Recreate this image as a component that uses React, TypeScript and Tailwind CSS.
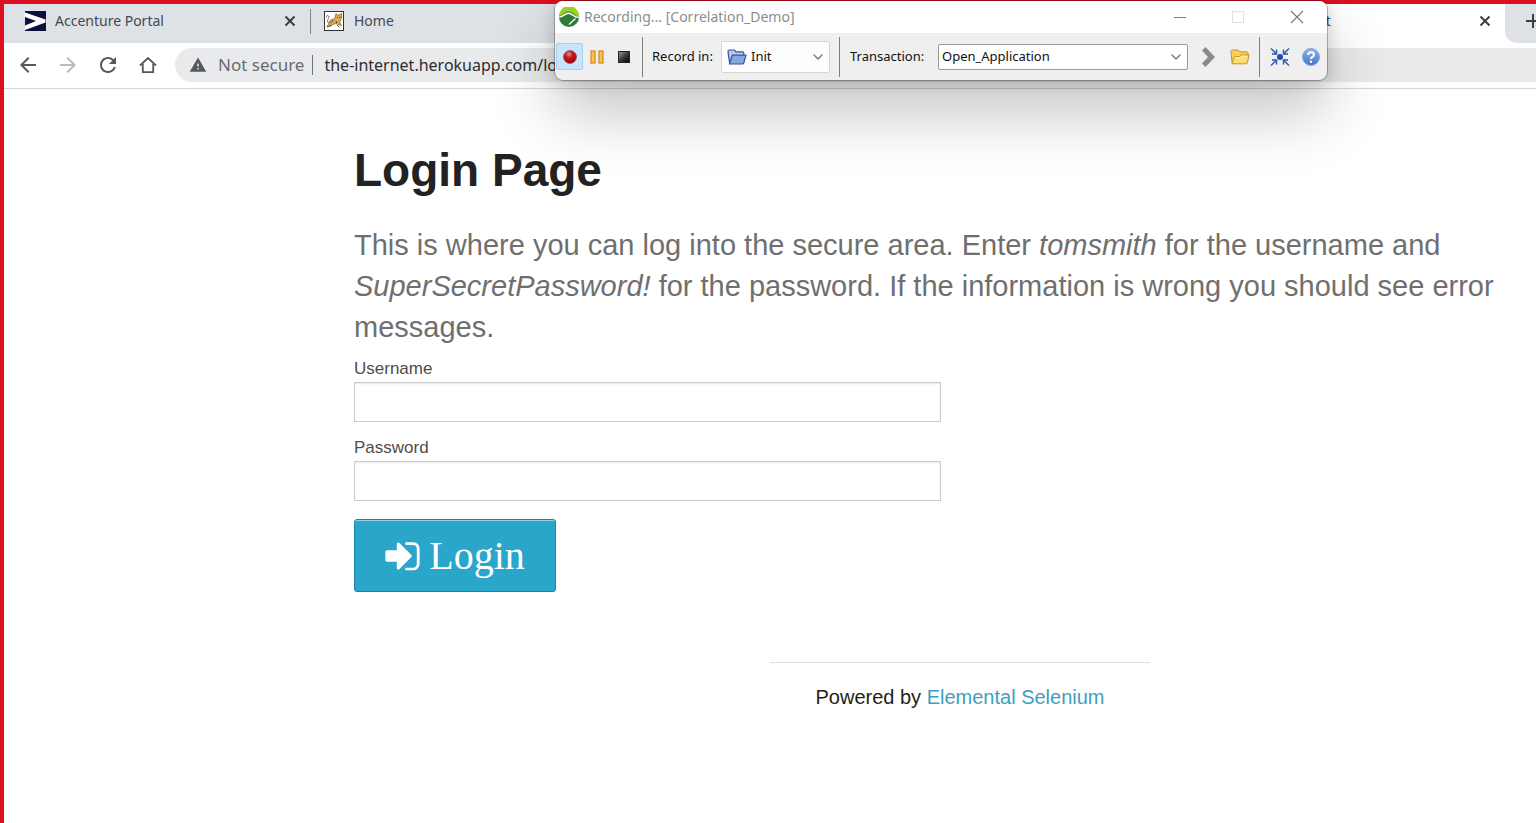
import React from "react";
import { MdArrowBack, MdArrowForward, MdRefresh, MdWarning } from "react-icons/md";
import { LuChevronDown } from "react-icons/lu";

function AccentureIcon() {
  return (
    <svg viewBox="0 0 21 20" className="h-5 w-[21px] shrink-0" aria-hidden="true">
      <rect width="21" height="20" fill="#0b1040" />
      <path d="M0 1.500L20.500 8.500V11.500L0 19V14.500L11 10L0 6Z" fill="#fff" />
    </svg>
  );
}

function CatIcon() {
  return (
    <svg viewBox="0 0 20 20" className="h-5 w-5 shrink-0" aria-hidden="true">
      <rect x=".5" y=".5" width="19" height="19" fill="#fff" stroke="#333" />
      <path d="M4.500 12C1.500 10 6 7 4.500 5C3.500 3.800 2.200 5 2.500 6.500" fill="none" stroke="#555" strokeWidth=".8" />
      <path d="M11.500 5L12 2.500L13.500 4L15.800 3.800L17.500 2L17.800 7L16.500 9L15.800 11.500L17.500 14.500L15 14L12 12.500L8.500 13.500L4.500 15.500L3 15L5 13L4.500 11L7.500 8.500L10.500 8Z" fill="#e0ab52" stroke="#6b4a1a" strokeWidth=".6" />
      <path d="M13 6L14 7M16 5.800L15.700 7M8 9L9 10.500M6.500 10.500L7.500 12M12 10L13 12" stroke="#3a2a12" strokeWidth=".8" />
      <path d="M2.500 16L8 14.500M13 14L15.500 16.500" stroke="#444" strokeWidth=".8" />
    </svg>
  );
}

function CloseGlyph() {
  return (
    <svg viewBox="0 0 12 12" className="h-3 w-3" aria-hidden="true">
      <path d="M1.500 1.500L10.500 10.500M10.500 1.500L1.500 10.500" stroke="#3c4043" strokeWidth="2" />
    </svg>
  );
}

function HomeGlyph() {
  return (
    <svg viewBox="0 0 18 18" className="h-[18px] w-[18px]" aria-hidden="true">
      <path d="M1 9.500L9 2L17 9.500M3.800 8V16.200H14.200V8" fill="none" stroke="#55585c" strokeWidth="1.800" />
    </svg>
  );
}

function NeoLoadIcon() {
  return (
    <svg viewBox="0 0 20 20" className="h-5 w-5 shrink-0" aria-hidden="true">
      <circle cx="10" cy="10" r="10" fill="#2f7a3b" />
      <path d="M0 9A10 10 0 0 1 20 9C16 10 14 4.500 9.500 4.500C5 4.500 4 9 0 9Z" fill="#9ad01c" />
      <path d="M.3 10C4.500 10 5.500 6.300 9.500 6.300C13.500 6.300 15 11 19.800 10.200" fill="none" stroke="#fff" strokeWidth="1.500" />
      <path d="M10 17.500L16.500 11.500" stroke="#fff" strokeWidth="1.300" />
    </svg>
  );
}

function RecordIcon() {
  return (
    <svg viewBox="0 0 16 16" className="h-4 w-4" aria-hidden="true">
      <defs>
        <radialGradient id="rec" cx=".42" cy=".28" r=".75">
          <stop offset="0" stopColor="#f08a8a" />
          <stop offset=".4" stopColor="#c9141c" />
          <stop offset="1" stopColor="#8e060c" />
        </radialGradient>
      </defs>
      <circle cx="8" cy="8" r="6.500" fill="url(#rec)" stroke="#a9404a" strokeWidth=".7" />
    </svg>
  );
}

function PauseIcon() {
  return (
    <svg viewBox="0 0 16 16" className="h-4 w-4" aria-hidden="true">
      <g fill="#f9c248" stroke="#d58420" strokeWidth="1.200">
        <rect x="2" y="2" width="4" height="12" />
        <rect x="10" y="2" width="4" height="12" />
      </g>
    </svg>
  );
}

function StopIcon() {
  return (
    <svg viewBox="0 0 16 16" className="h-4 w-4" aria-hidden="true">
      <defs>
        <linearGradient id="stop" x1="0" y1="0" x2="1" y2="1">
          <stop offset="0" stopColor="#a0a0a0" />
          <stop offset=".5" stopColor="#3a3a3a" />
          <stop offset="1" stopColor="#050505" />
        </linearGradient>
      </defs>
      <rect x="2.500" y="2.500" width="11" height="11" fill="url(#stop)" stroke="#222" />
    </svg>
  );
}

function BlueFolder() {
  return (
    <svg viewBox="0 0 20 16" className="h-4 w-5" aria-hidden="true">
      <path d="M2.500 13.500L1 3Q1 1 2.500 1H7.500L9 2.800H15.500Q16.800 2.800 16.800 4V6" fill="#b5cbee" stroke="#35549a" strokeWidth="1.200" />
      <path d="M2.500 15L5 7Q5.300 6.200 6.200 6.200H19L16.800 14Q16.500 15 15.500 15Z" fill="#86a8e2" stroke="#35549a" strokeWidth="1.200" />
    </svg>
  );
}

function YellowFolder() {
  return (
    <svg viewBox="0 0 20 18" className="h-[18px] w-5" aria-hidden="true">
      <path d="M2 14.500L1 3.500Q1 2 2.500 2H8L9.500 3.800H16.500Q18 3.800 18 5.300V8" fill="#f6cf55" stroke="#c2942a" />
      <path d="M2 15.800L3.800 9.500Q4 8.500 5.500 8.500L9.500 8.500L11.500 7H19L17.300 15Q17 15.800 16 15.800Z" fill="#fbdc6c" stroke="#c2942a" />
      <path d="M5 9.800H10L12 8.200H17.500" fill="none" stroke="#fff3bd" />
    </svg>
  );
}

function CollapseIcon() {
  return (
    <svg viewBox="0 0 20 20" className="h-5 w-5" aria-hidden="true">
      <circle cx="10" cy="10" r="3" fill="#1d4fb4" />
      <g fill="none" stroke="#2a58b4" strokeWidth="1.500">
        <path d="M1 1.500L6 6.500M19 1.500L14 6.500M1 18.500L6 13.500M19 18.500L14 13.500" />
        <path d="M6.500 2.500V7H2M13.500 2.500V7H18M6.500 17.500V13H2M13.500 17.500V13H18" />
      </g>
    </svg>
  );
}

function HelpIcon() {
  return (
    <svg viewBox="0 0 20 20" className="h-5 w-5" aria-hidden="true">
      <defs>
        <linearGradient id="help" x1="0" y1="0" x2="0" y2="1">
          <stop offset="0" stopColor="#8fb3ea" />
          <stop offset="1" stopColor="#4375c8" />
        </linearGradient>
      </defs>
      <circle cx="10" cy="10" r="8.500" fill="url(#help)" stroke="#86a6da" />
      <path d="M7 8Q7 5.200 10 5.200Q13 5.200 13 7.600Q13 9.200 11.300 10Q10 10.700 10 12" fill="none" stroke="#fff" strokeWidth="2" />
      <circle cx="10" cy="14.700" r="1.200" fill="#fff" />
    </svg>
  );
}

function SignInIcon() {
  return (
    <svg viewBox="0 0 1536 1792" className="h-10 w-[35px]" fill="currentColor" aria-hidden="true">
      <path d="M1184 896q0 26-19 45l-544 544q-19 19-45 19t-45-19-19-45v-288h-448q-26 0-45-19t-19-45v-384q0-26 19-45t45-19h448v-288q0-26 19-45t45-19 45 19l544 544q19 19 19 45zm352-352v704q0 119-84.500 203.500t-203.500 84.500h-320q-13 0-22.500-9.500t-9.500-22.500q-1-4-1-20t1-26 10-23 22-8h320q66 0 113-47t47-113v-704q0-66-47-113t-113-47h-312l-11.500-1-11.500-3-8-5.500-7-9-2-13.500q-1-4-1-20t.5-26.500 3-23.500 10-19.500 20.500-6.500h320q119 0 203.500 84.500t84.500 203.500z" />
    </svg>
  );
}

function Separator() {
  return <span className="h-10 w-px shrink-0 bg-[#7d7d7d]" />;
}

function TabStrip() {
  return (
    <div className="flex h-[39px] bg-[#dee1e6] text-sm text-[#45494d]">
      <div className="flex w-[306px] shrink-0 items-center gap-[9px] pr-[10px] pb-[5px] pl-[21px]">
        <AccentureIcon />
        <span className="flex-1">Accenture Portal</span>
        <button type="button" aria-label="Close Accenture Portal" className="grid h-5 w-5 place-items-center">
          <CloseGlyph />
        </button>
      </div>
      <span className="mt-[5px] h-[25px] w-px shrink-0 bg-[#80868b]" />
      <div className="flex flex-1 items-center gap-[10px] pb-[5px] pl-[13px]">
        <CatIcon />
        <span>Home</span>
      </div>
      <div className="flex w-[256px] shrink-0 items-center justify-between bg-white pr-[10px] pb-[5px]">
        <span>The Internet</span>
        <button type="button" aria-label="Close tab" className="grid h-5 w-5 place-items-center">
          <CloseGlyph />
        </button>
      </div>
      <div className="w-[31px] shrink-0 bg-white">
        <div className="flex h-full items-center rounded-bl-xl bg-[#dee1e6] pb-[5px] pl-5">
          <button type="button" aria-label="New tab" className="w-[11px] overflow-hidden">
            <svg viewBox="0 0 16 16" className="h-4 w-4" aria-hidden="true">
              <path d="M8 1V15M1 8H15" stroke="#3c4043" strokeWidth="2" />
            </svg>
          </button>
        </div>
      </div>
    </div>
  );
}

function AddressBar() {
  return (
    <div className="flex h-[46px] items-center border-b border-[#d5d6d8] bg-white pb-px pl-3">
      <div className="flex w-[159px] shrink-0 items-center gap-4 text-[#55585c]">
        <button type="button" aria-label="Back"><MdArrowBack className="h-6 w-6" /></button>
        <button type="button" aria-label="Forward" className="text-[#b9bbbe]"><MdArrowForward className="h-6 w-6" /></button>
        <button type="button" aria-label="Reload"><MdRefresh className="h-6 w-6" /></button>
        <button type="button" aria-label="Home" className="grid h-6 w-6 place-items-center"><HomeGlyph /></button>
      </div>
      <div className="flex h-[34px] flex-1 items-center rounded-l-full bg-[#e9eaec] pl-[14px] text-[17px]">
        <MdWarning className="h-[18px] w-[18px] shrink-0 text-[#55585c]" />
        <span className="ml-[11px] text-[#696c70]">Not secure</span>
        <span className="ml-2 h-5 w-px shrink-0 bg-[#6f7276]" />
        <input
          aria-label="Address"
          defaultValue="the-internet.herokuapp.com/login"
          className="ml-[11px] min-w-0 flex-1 bg-transparent text-base text-[#2c2e31] outline-none"
        />
      </div>
    </div>
  );
}

function RecorderWindow() {
  return (
    <section
      aria-label="Recorder"
      className="absolute top-px left-[555px] w-[772px] overflow-hidden rounded-lg bg-[#efefef] shadow-[0_0_0_1px_rgba(0,0,0,0.25),0_2px_16px_rgba(0,0,0,0.18),0_32px_64px_rgba(0,0,0,0.24)]"
    >
      <header className="flex h-8 items-center bg-white pr-[23px] pb-px pl-1">
        <NeoLoadIcon />
        <h2 className="ml-[5px] flex-1 text-sm text-[#8d8d8d]">Recording... [Correlation_Demo]</h2>
        <div className="flex items-center gap-[46px]">
          <button type="button" aria-label="Minimize">
            <svg viewBox="0 0 12 12" className="h-3 w-3"><path d="M0 6.500H12" stroke="#808080" /></svg>
          </button>
          <button type="button" aria-label="Maximize" disabled>
            <svg viewBox="0 0 12 12" className="h-3 w-3"><rect x=".5" y=".5" width="11" height="11" fill="none" stroke="#e2e2e2" /></svg>
          </button>
          <button type="button" aria-label="Close">
            <svg viewBox="0 0 14 14" className="h-[14px] w-[14px]"><path d="M1 1L13 13M13 1L1 13" stroke="#777" strokeWidth="1.100" /></svg>
          </button>
        </div>
      </header>
      <div className="flex h-[47px] items-center pr-[6px] pl-px text-[13px] text-[#111]">
        <button type="button" aria-label="Record" className="grid h-[27px] w-[27px] shrink-0 place-items-center rounded-xs border border-[#a6d0f3] bg-[#c9e5fb]">
          <RecordIcon />
        </button>
        <button type="button" aria-label="Pause" className="ml-[6px] shrink-0"><PauseIcon /></button>
        <button type="button" aria-label="Stop" className="mr-[10px] ml-[11px] shrink-0"><StopIcon /></button>
        <Separator />
        <label htmlFor="container" className="w-[78px] shrink-0 pl-[9px]">Record in:</label>
        <div className="relative mr-[9px] flex h-8 w-[109px] shrink-0 items-center rounded-xs border border-[#d6d6d6] bg-[#fdfdfd]">
          <span className="pointer-events-none absolute left-[5px]"><BlueFolder /></span>
          <select id="container" className="h-full w-full appearance-none bg-transparent pl-[29px] outline-none">
            <option>Init</option>
          </select>
          <LuChevronDown className="pointer-events-none absolute right-[3px] h-4 w-4 text-[#777]" />
        </div>
        <Separator />
        <label htmlFor="transaction" className="w-[98px] shrink-0 pl-[10px]">Transaction:</label>
        <div className="relative flex h-[26px] min-w-0 flex-1 items-center rounded-xs border border-[#999] bg-white">
          <select id="transaction" className="h-full w-full appearance-none bg-transparent pl-[3px] outline-none">
            <option>Open_Application</option>
          </select>
          <LuChevronDown className="pointer-events-none absolute right-[3px] h-4 w-4 text-[#777]" />
        </div>
        <button type="button" aria-label="Next" className="ml-[13px] shrink-0">
          <svg viewBox="0 0 16 20" className="h-5 w-4"><path d="M1 3.500L4.500 0L14 10L4.500 20L1 16.500L7 10Z" fill="#8b8b8b" /></svg>
        </button>
        <button type="button" aria-label="Open" className="mr-[9px] ml-[13px] shrink-0"><YellowFolder /></button>
        <Separator />
        <button type="button" aria-label="Collapse" className="ml-[10px] shrink-0"><CollapseIcon /></button>
        <button type="button" aria-label="Help" className="ml-[11px] shrink-0"><HelpIcon /></button>
      </div>
    </section>
  );
}

const fieldClass =
  "block h-10 w-[587px] max-w-full border border-[#ccc] bg-white px-2 text-[17px] shadow-[inset_0_1px_2px_rgba(0,0,0,0.1)] outline-none";

export default function App() {
  return (
    <div className="relative overflow-hidden font-['Noto_Sans',sans-serif]">
      <div className="min-h-screen border-t-4 border-l-4 border-[#db1020] bg-white">
        <TabStrip />
        <AddressBar />
        <main className="pt-[49px] pl-[350px] font-['Liberation_Sans',sans-serif]">
          <h1 className="text-[46px] leading-[64px] font-bold text-[#222]">Login Page</h1>
          <p className="mt-[23px] text-[29px] leading-[41px] text-[#6f6f6f]">
            This is where you can log into the secure area. Enter <em>tomsmith</em> for the username and{" "}
            <em>SuperSecretPassword!</em> for the password. If the information is wrong you should see error messages.
          </p>
          <form className="mt-2" onSubmit={(e: React.FormEvent) => e.preventDefault()}>
            <label htmlFor="username" className="block text-[17px] leading-[26px] text-[#4d4d4d]">Username</label>
            <input id="username" type="text" className={fieldClass} />
            <label htmlFor="password" className="mt-[13px] block text-[17px] leading-[26px] text-[#4d4d4d]">Password</label>
            <input id="password" type="password" className={fieldClass} />
            <button
              type="submit"
              className="mt-[18px] flex h-[73px] w-[202px] items-center justify-center gap-[9px] rounded-[3px] border border-[#1e83a3] bg-[#2ba6cb] font-['Liberation_Serif',serif] text-[40px] text-white shadow-[inset_0_1px_0_rgba(255,255,255,0.5)]"
            >
              <SignInIcon />
              Login
            </button>
          </form>
          <footer className="mt-[70px] flex flex-col items-center pl-[30px]">
            <hr className="w-[380px] border-[#ddd]" />
            <p className="mt-[19px] text-xl leading-[30px] text-[#222]">
              Powered by <a href="#selenium" className="text-[#3d9fc0]">Elemental Selenium</a>
            </p>
          </footer>
        </main>
      </div>
      <RecorderWindow />
    </div>
  );
}
